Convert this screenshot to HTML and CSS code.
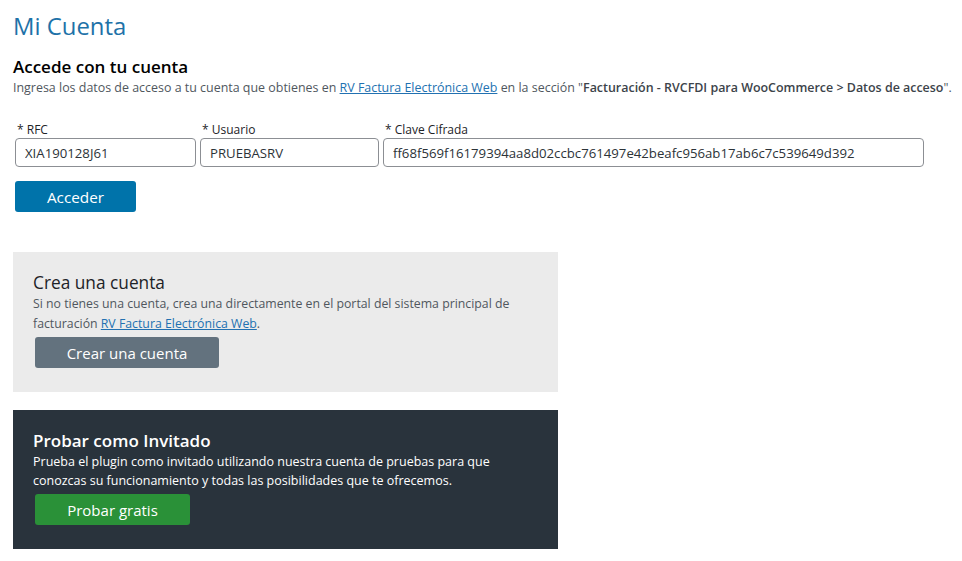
FILE: index.html
```html
<!DOCTYPE html>
<html lang="es">
<head>
<meta charset="utf-8">
<title>Mi Cuenta</title>
<link rel="stylesheet" href="styles.css">
</head>
<body>
<div class="wrap">
  <h1 class="title">Mi Cuenta</h1>
  <section class="login">
    <h2 class="subtitle">Accede con tu cuenta</h2>
    <p class="desc">Ingresa los datos de acceso a tu cuenta que obtienes en <a href="#">RV Factura Electrónica Web</a> en la sección "<b>Facturación - RVCFDI para WooCommerce &gt; Datos de acceso</b>".</p>
    <div class="fields">
      <label class="field f-rfc"><span class="lbl">* RFC</span><input type="text" value="XIA190128J61"></label>
      <label class="field f-user"><span class="lbl">* Usuario</span><input type="text" value="PRUEBASRV"></label>
      <label class="field f-key"><span class="lbl">* Clave Cifrada</span><input type="text" value="ff68f569f16179394aa8d02ccbc761497e42beafc956ab17ab6c7c539649d392"></label>
    </div>
    <button class="btn btn-blue">Acceder</button>
  </section>
  <section class="card card-light">
    <h3 class="card-title">Crea una cuenta</h3>
    <p class="card-text">Si no tienes una cuenta, crea una directamente en el portal del sistema principal de facturación <a href="#">RV Factura Electrónica Web</a>.</p>
    <button class="btn btn-gray">Crear una cuenta</button>
  </section>
  <section class="card card-dark">
    <h3 class="card-title bold">Probar como Invitado</h3>
    <p class="card-text">Prueba el plugin como invitado utilizando nuestra cuenta de pruebas para que conozcas su funcionamiento y todas las posibilidades que te ofrecemos.</p>
    <button class="btn btn-green">Probar gratis</button>
  </section>
</div>
</body>
</html>
```
FILE: styles.css
```css
* { box-sizing: border-box; }
html, body { margin: 0; padding: 0; background: #fff; }
body { font-family: "Open Sans", "Noto Sans", sans-serif; color: #1d2327; }
.wrap { padding: 8px 13px 0 13px; }
.title { margin: 0; font-size: 23.9px; font-weight: 500; color: #1e72a8; line-height: 36px; }
.login { margin-top: 12px; }
.subtitle { margin: 0; font-size: 17px; font-weight: 600; color: #000; line-height: 22px; }
.desc { margin: 1px 0 0; font-size: 12.45px; color: #50575e; line-height: 18px; white-space: nowrap; }
.desc b { color: #3c434a; font-weight: 600; }
a { color: #2271b1; }
.fields { display: flex; gap: 4px; margin-top: 25px; padding-left: 2px; }
.field { display: flex; flex-direction: column; }
.lbl { font-size: 12px; line-height: 16px; color: #1d2327; padding-left: 2px; }
.field input { height: 29px; border: 1px solid #8c8f94; border-radius: 4px; padding: 0 9px; font: 13.2px "Open Sans", sans-serif; color: #2c3338; }
.f-rfc input { width: 181px; }
.f-user input { width: 179px; }
.f-key input { width: 541px; }
.btn { display: block; border: 0; border-radius: 3px; color: #fff; font: 15px "Open Sans", sans-serif; height: 31px; padding: 0; }
.btn-blue { background: #0073aa; width: 121px; margin: 14px 0 0 2px; font-size: 15.3px; }
.card { width: 545px; padding: 18px 20px; }
.card-light { background: #ebebeb; margin-top: 40px; height: 140px; }
.card-dark { background: #29333c; margin-top: 18px; height: 139px; color: #fff; }
.card-title { margin: 2px 0 0; font-size: 17.3px; font-weight: 400; line-height: 22px; color: #1d2327; }
.card-dark .card-title { color: #fff; font-size: 17px; }
.card-title.bold { font-weight: 600; }
.card-text { margin: 0; font-size: 12.3px; line-height: 20px; color: #50575e; }
.card-dark .card-text { color: #fff; line-height: 19px; font-size: 12.5px; max-width: 470px; }
.btn-gray { background: #63727e; width: 184px; margin-left: 2px; margin-top: 3px; }
.btn-green { background: #2a9138; width: 155px; margin-left: 2px; margin-top: 4px; }
```
